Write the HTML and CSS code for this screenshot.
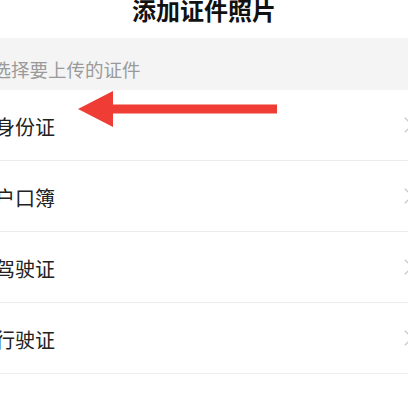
FILE: index.html
```html
<!DOCTYPE html>
<html lang="zh-CN">
<head>
    <meta charset="UTF-8">
    <meta name="viewport" content="width=device-width, initial-scale=1.0">
    <title>添加证件照片</title>
    <link rel="stylesheet" href="styles.css">
</head>
<body>
    <div class="page">
        <div class="nav-bar">
            <h1 class="nav-title">添加证件照片</h1>
        </div>

        <div class="section-tip">选择要上传的证件</div>

        <!-- 证件列表 -->
        <div class="doc-list">
            <div class="doc-item">
                <span class="doc-name">身份证</span>
                <svg class="doc-arrow" viewBox="0 0 10 18"><path d="M1 1 L9 9 L1 17" /></svg>
            </div>
            <div class="doc-item">
                <span class="doc-name">户口簿</span>
                <svg class="doc-arrow" viewBox="0 0 10 18"><path d="M1 1 L9 9 L1 17" /></svg>
            </div>
            <div class="doc-item">
                <span class="doc-name">驾驶证</span>
                <svg class="doc-arrow" viewBox="0 0 10 18"><path d="M1 1 L9 9 L1 17" /></svg>
            </div>
            <div class="doc-item">
                <span class="doc-name">行驶证</span>
                <svg class="doc-arrow" viewBox="0 0 10 18"><path d="M1 1 L9 9 L1 17" /></svg>
            </div>
            <div class="doc-item">
                <span class="doc-name">护照</span>
                <svg class="doc-arrow" viewBox="0 0 10 18"><path d="M1 1 L9 9 L1 17" /></svg>
            </div>
        </div>

        <!-- 标注箭头 -->
        <svg class="mark-arrow" viewBox="0 0 199 36">
            <polygon points="0,18 35,0 35,13.5 199,13.5 199,22.5 35,22.5 35,36" />
        </svg>
    </div>
</body>
</html>
```

FILE: styles.css
```css
:root {
    --text-main: #222;
    --text-tip: #9a9a9a;
    --bg-tip: #f4f4f4;
    --line: #ececec;
    --chevron: #c8c8c8;
    --mark-red: #ef3d35;
}

html, body {
    margin: 0;
    padding: 0;
    background: #fff;
    overflow: hidden;
}

body {
    font-family: "Noto Sans CJK SC", "Noto Sans", sans-serif;
    color: var(--text-main);
}

.page {
    position: relative;
    width: 408px;
    height: 400px;
    overflow: hidden;
}

.nav-bar {
    height: 38px;
    margin-top: -6px;
}

.nav-title {
    margin: 0;
    font-size: 24px;
    line-height: 24px;
    font-weight: 700;
    text-align: center;
    color: #111;
    padding-top: 4px;
}

.section-tip {
    background: var(--bg-tip);
    color: var(--text-tip);
    font-size: 18.5px;
    line-height: 20px;
    height: 20px;
    padding: 21px 0 11px;
    margin-top: 6px;
    text-indent: -7.5px;
}

.doc-item {
    height: 70px;
    border-bottom: 1px solid var(--line);
    display: flex;
    align-items: center;
    justify-content: space-between;
}

.doc-name {
    font-size: 20px;
    line-height: 20px;
    margin-left: -5px;
    padding-top: 4px;
}

.doc-arrow {
    width: 9px;
    height: 18px;
    margin-right: -5px;
    fill: none;
    stroke: var(--chevron);
    stroke-width: 1.5;
}

.mark-arrow {
    position: absolute;
    left: 78px;
    top: 91px;
    width: 199px;
    height: 36px;
    fill: var(--mark-red);
}
```
